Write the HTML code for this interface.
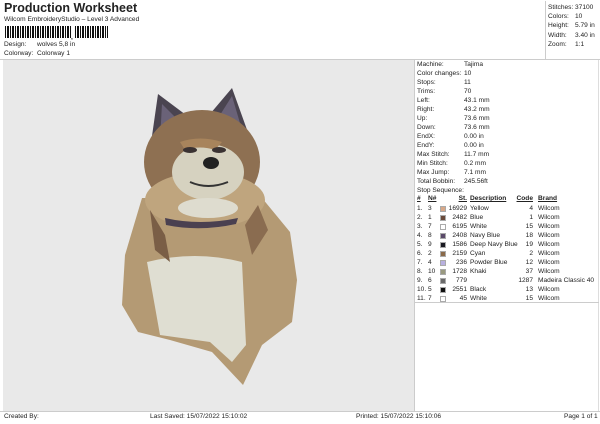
<!DOCTYPE html>
<html><head><meta charset="utf-8"><style>
*{margin:0;padding:0;box-sizing:border-box}
body{width:600px;height:424px;background:#fff;font-family:"Liberation Sans",sans-serif;font-size:6.6px;color:#222;position:relative;overflow:hidden}
.a{position:absolute;white-space:nowrap}
.t{font-weight:bold;font-size:12.5px;left:4px;top:1px}
.sr{height:9px;padding-top:1.5px}
.sw{width:6px;height:6px;border:1px solid #aaa}
.c{line-height:9px}
.h{font-weight:bold;text-decoration:underline;top:195px}
</style></head><body>
<div class="a t">Production Worksheet</div>
<div class="a" style="left:4px;top:16px">Wilcom EmbroideryStudio – Level 3 Advanced</div>
<div class="a" style="left:5px;top:26px;width:67px;height:12px;background:repeating-linear-gradient(90deg,#111 0 1px,#fff 1px 2px,#111 2px 4px,#fff 4px 5px)"></div>
<div class="a" style="left:71px;top:34px;font-weight:bold">,</div>
<div class="a" style="left:75px;top:26px;width:33px;height:12px;background:repeating-linear-gradient(90deg,#111 0 1px,#fff 1px 2px,#111 2px 4px,#fff 4px 5px)"></div>
<div class="a" style="left:4px;top:41px">Design:</div><div class="a" style="left:37px;top:41px">wolves 5,8 in</div>
<div class="a" style="left:4px;top:50px">Colorway:</div><div class="a" style="left:37px;top:50px">Colorway 1</div>
<div class="a" style="left:545px;top:1px;width:1px;height:58px;background:#ccc"></div>
<div class="a" style="left:0;top:59px;width:600px;height:1px;background:#ccc"></div>
<div class="a" style="left:548px;top:3px;line-height:9.2px">Stitches:<br>Colors:<br>Height:<br>Width:<br>Zoom:</div>
<div class="a" style="left:575px;top:3px;line-height:9.2px">37100<br>10<br>5.79 in<br>3.40 in<br>1:1</div>
<div class="a" style="left:3px;top:60px;width:411px;height:351px;background:#e9e9e9"></div>
<div class="a" style="left:414px;top:60px;width:1px;height:351px;background:#ccc"></div>
<div class="a" style="left:598px;top:60px;width:1px;height:351px;background:#ddd"></div>
<svg class="a" style="left:0;top:0" width="600" height="424">
<polygon points="150,150 158,94 190,118" fill="#4a4450"/>
<polygon points="210,114 232,88 255,152" fill="#4a4450"/>
<polygon points="160,140 162,104 180,122" fill="#6a6278"/>
<polygon points="220,115 232,96 245,140" fill="#6a6278"/>
<path d="M142,198 L125,255 L122,305 L138,332 L170,340 L212,352 L243,385 L262,345 L292,322 L297,280 L290,232 L262,198 Z" fill="#b49a74"/>
<ellipse cx="202" cy="162" rx="58" ry="52" fill="#8e7052"/>
<ellipse cx="205" cy="200" rx="60" ry="28" fill="#bfa57e"/>
<ellipse cx="208" cy="172" rx="36" ry="28" fill="#d6d2c0"/>
<ellipse cx="208" cy="208" rx="30" ry="10" fill="#dedccf"/>
<path d="M147,262 Q195,250 242,262 L246,345 L232,362 L210,342 L160,335 Z" fill="#dfded2"/>
<path d="M165,218 Q200,226 238,218 L236,224 Q200,232 166,225 Z" fill="#4a4050"/>
<path d="M150,210 L165,235 L170,262 L155,250 Z" fill="#7a5e46"/>
<path d="M258,205 L245,225 L252,255 L268,230 Z" fill="#8a6c50"/>
<path d="M180,142 Q200,135 222,142 L215,150 Q200,145 185,150 Z" fill="#a8845c"/>
<ellipse cx="190" cy="150" rx="7" ry="3" fill="#3a3232"/>
<ellipse cx="219" cy="150" rx="7" ry="3" fill="#3a3232"/>
<ellipse cx="211" cy="163" rx="8" ry="6" fill="#222"/>
<path d="M190,182 Q208,190 228,182" stroke="#333" stroke-width="2" fill="none"/>
</svg>
<div class="a" style="left:417px;top:60px;line-height:9px">Machine:<br>Color changes:<br>Stops:<br>Trims:<br>Left:<br>Right:<br>Up:<br>Down:<br>EndX:<br>EndY:<br>Max Stitch:<br>Min Stitch:<br>Max Jump:<br>Total Bobbin:<br>Stop Sequence:</div>
<div class="a" style="left:464px;top:60px;line-height:9px">Tajima<br>10<br>11<br>70<br>43.1 mm<br>43.2 mm<br>73.6 mm<br>73.6 mm<br>0.00 in<br>0.00 in<br>11.7 mm<br>0.2 mm<br>7.1 mm<br>245.56ft</div>
<div class="a h" style="left:417px">#</div>
<div class="a h" style="left:428px">N#</div>
<div class="a h" style="left:447px;width:20px;text-align:right">St.</div>
<div class="a h" style="left:470px">Description</div>
<div class="a h" style="left:513px;width:20px;text-align:right">Code</div>
<div class="a h" style="left:538px">Brand</div>
<div class="a c" style="left:417px;top:204px">1.<br>2.<br>3.<br>4.<br>5.<br>6.<br>7.<br>8.<br>9.<br>10.<br>11.</div>
<div class="a c" style="left:428px;top:204px">3<br>1<br>7<br>8<br>9<br>2<br>4<br>10<br>6<br>5<br>7</div>
<div class="a" style="left:440px;top:204px">
<div class="sr"><div class="sw" style="background:#d8a888"></div></div>
<div class="sr"><div class="sw" style="background:#6a4a3a"></div></div>
<div class="sr"><div class="sw" style="background:#fff"></div></div>
<div class="sr"><div class="sw" style="background:#5a4a6a"></div></div>
<div class="sr"><div class="sw" style="background:#1a1a22"></div></div>
<div class="sr"><div class="sw" style="background:#8a6a4a"></div></div>
<div class="sr"><div class="sw" style="background:#b8b0e0"></div></div>
<div class="sr"><div class="sw" style="background:#9a9a80"></div></div>
<div class="sr"><div class="sw" style="background:#6a6a6a"></div></div>
<div class="sr"><div class="sw" style="background:#111"></div></div>
<div class="sr"><div class="sw" style="background:#fff"></div></div>
</div>
<div class="a c" style="left:443px;top:204px;width:24px;text-align:right">16929<br>2482<br>6195<br>2408<br>1586<br>2159<br>236<br>1728<br>779<br>2551<br>45</div>
<div class="a c" style="left:470px;top:204px">Yellow<br>Blue<br>White<br>Navy Blue<br>Deep Navy Blue<br>Cyan<br>Powder Blue<br>Khaki<br>&nbsp;<br>Black<br>White</div>
<div class="a c" style="left:505px;top:204px;width:28px;text-align:right">4<br>1<br>15<br>18<br>19<br>2<br>12<br>37<br>1287<br>13<br>15</div>
<div class="a c" style="left:538px;top:204px">Wilcom<br>Wilcom<br>Wilcom<br>Wilcom<br>Wilcom<br>Wilcom<br>Wilcom<br>Wilcom<br>Madeira Classic 40<br>Wilcom<br>Wilcom</div>
<div class="a" style="left:415px;top:302px;width:184px;height:1px;background:#ccc"></div>
<div class="a" style="left:0;top:411px;width:600px;height:1px;background:#ccc"></div>
<div class="a" style="left:4px;top:413px">Created By:</div>
<div class="a" style="left:150px;top:413px">Last Saved: 15/07/2022 15:10:02</div>
<div class="a" style="left:356px;top:413px">Printed: 15/07/2022 15:10:06</div>
<div class="a" style="left:564px;top:413px">Page 1 of 1</div>
</body></html>
